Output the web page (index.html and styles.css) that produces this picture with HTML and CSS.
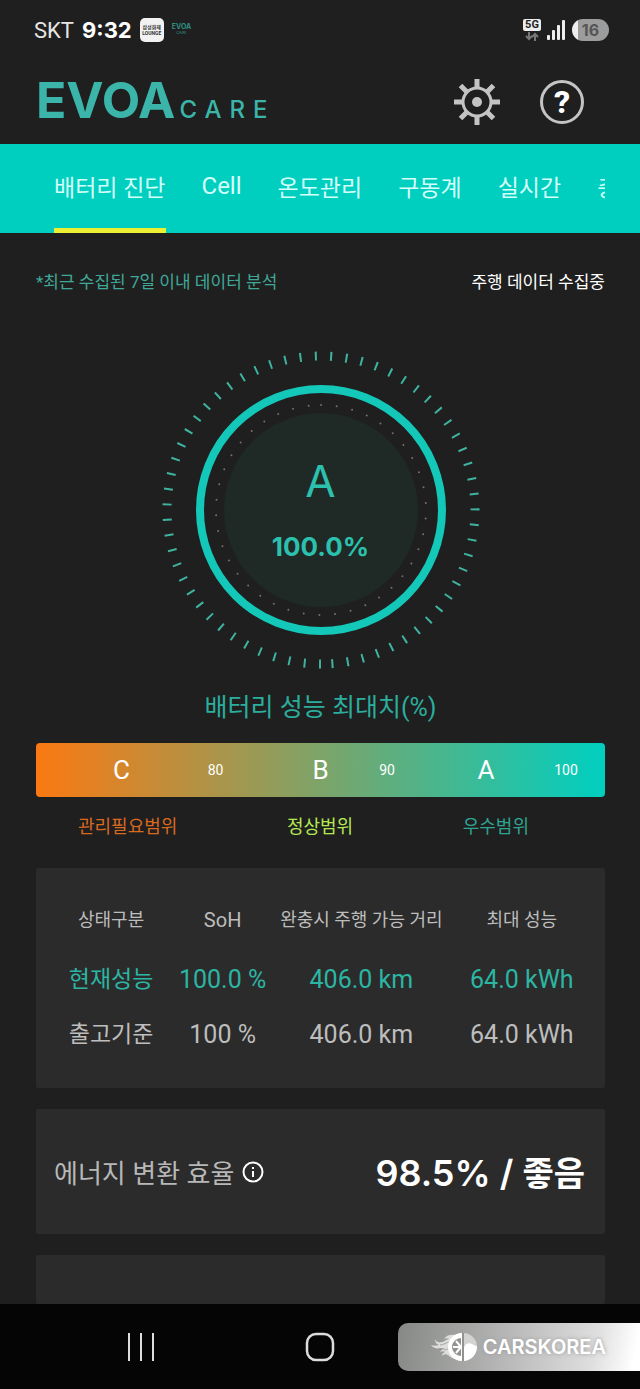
FILE: index.html
```html
<!DOCTYPE html>
<html lang="ko">
<head>
  <meta charset="UTF-8">
  <meta name="viewport" content="width=device-width, initial-scale=1.0">
  <title>EVOA CARE</title>
  <link rel="stylesheet" href="styles.css">
</head>
<body>
  <div class="status-bar">
    <span class="carrier">SKT</span>
    <span class="clock">9:32</span>
    <span class="app-badge"><span>삼성화재</span><span>LOUNGE</span></span>
    <span class="app-mini"><span>EVOA</span><span class="app-mini-sub">CARE</span></span>
    <div class="status-right">
      <span class="network">
        <span class="network-label">5G</span>
        <svg width="14" height="9" viewBox="0 0 14 9" fill="none" stroke="#777" stroke-width="2">
          <path d="M4 0v7M1 4l3 3 3-3M10 9V2M7 5l3-3 3 3"/>
        </svg>
      </span>
      <svg width="19" height="21" viewBox="0 0 19 21" fill="#eee">
        <rect x="0" y="15" width="3" height="5" rx="1"/>
        <rect x="5" y="10" width="3" height="10" rx="1"/>
        <rect x="10" y="5" width="3" height="15" rx="1"/>
        <rect x="15" y="0" width="3" height="20" rx="1"/>
      </svg>
      <span class="battery">16</span>
    </div>
  </div>

  <header class="header">
    <h1 class="logo"><span class="logo-main">EVOA</span><span class="logo-sub">CARE</span></h1>
    <div class="header-buttons">
      <button type="button" aria-label="설정">
        <svg width="46" height="46" viewBox="0 0 46 46" fill="none" stroke="#c4c4c4">
          <circle cx="23" cy="23" r="14" stroke-width="3"/>
          <circle cx="23" cy="23" r="5" fill="#c4c4c4" stroke="none"/>
          <path stroke-width="5" d="M23 0v9M23 37v9M0 23h9M37 23h9M6.500 6.500l6.500 6.500M33 33l6.500 6.500M39.500 6.500L33 13M13 33l-6.500 6.500"/>
        </svg>
      </button>
      <button type="button" class="help-btn" aria-label="도움말">?</button>
    </div>
  </header>

  <nav class="tabs">
    <div class="tab-list">
      <a href="#battery" class="tab active">배터리 진단</a>
      <a href="#cell" class="tab tab-latin">Cell</a>
      <a href="#temp" class="tab">온도관리</a>
      <a href="#drive" class="tab">구동계</a>
      <a href="#live" class="tab">실시간</a>
      <a href="#charge" class="tab">충전</a>
    </div>
  </nav>

  <main class="content">
    <div class="notice">
      <span class="notice-left">*최근 수집된 7일 이내 데이터 분석</span>
      <span>주행 데이터 수집중</span>
    </div>

    <div class="gauge">
      <svg width="320" height="320" viewBox="0 0 320 320" fill="none">
        <circle cx="160" cy="160" r="154" stroke="#3fb39f" stroke-width="9" stroke-dasharray="2 13.4" transform="rotate(90 160 160)"/>
        <circle cx="160" cy="160" r="121" stroke="#14c8b9" stroke-width="8"/>
        <circle cx="160" cy="160" r="105" stroke="#77706c" stroke-width="2" stroke-linecap="round" stroke-dasharray="0 15.77" transform="rotate(-90 160 160)"/>
        <circle cx="160" cy="160" r="97" fill="#1f2a27"/>
      </svg>
      <div class="gauge-text">
        <span class="grade">A</span>
        <span class="percent">100.0%</span>
      </div>
    </div>

    <h2 class="gauge-title">배터리 성능 최대치(%)</h2>

    <div class="range-bar">
      <b>C</b><span>80</span><b>B</b><span>90</span><b>A</b><span>100</span>
    </div>
    <div class="range-labels">
      <span class="bad">관리필요범위</span>
      <span class="normal">정상범위</span>
      <span class="good">우수범위</span>
    </div>

    <section class="card table-card">
      <table>
        <colgroup>
          <col class="col-name"><col class="col-soh"><col class="col-range"><col class="col-max">
        </colgroup>
        <thead>
          <tr>
            <th>상태구분</th>
            <th class="th-latin">SoH</th>
            <th>완충시 주행 가능 거리</th>
            <th>최대 성능</th>
          </tr>
        </thead>
        <tbody>
          <tr class="current">
            <th>현재성능</th>
            <td>100.0 %</td>
            <td>406.0 km</td>
            <td>64.0 kWh</td>
          </tr>
          <tr>
            <th>출고기준</th>
            <td>100 %</td>
            <td>406.0 km</td>
            <td>64.0 kWh</td>
          </tr>
        </tbody>
      </table>
    </section>

    <section class="card efficiency">
      <div class="efficiency-label">
        <span>에너지 변환 효율</span>
        <button type="button" aria-label="정보">
          <svg width="22" height="22" viewBox="0 0 22 22" fill="none" stroke="#fff" stroke-width="2">
            <circle cx="11" cy="11" r="9.500"/>
            <path d="M11 10v6M11 6v2"/>
          </svg>
        </button>
      </div>
      <div class="efficiency-value">98.5% / <span>좋음</span></div>
    </section>

    <section class="card next-card"></section>
  </main>

  <footer class="nav-bar">
    <button type="button" aria-label="최근 앱">
      <svg width="28" height="28" viewBox="0 0 28 28" stroke="#ddd" stroke-width="2">
        <path d="M2 0v28M14 0v28M26 0v28"/>
      </svg>
    </button>
    <button type="button" aria-label="홈">
      <svg width="30" height="30" viewBox="0 0 30 30" fill="none" stroke="#ddd" stroke-width="2.500">
        <rect x="2" y="2" width="26" height="26" rx="9"/>
      </svg>
    </button>
    <div class="watermark">
      <svg width="48" height="30" viewBox="0 0 48 30">
        <path fill="#dededd" d="M26 3C21 2 16 3 14 7c2-1 4-1 5 0-3 0-4 3-7 3-3 1-6 0-7-3 0 3 1 5 4 6-3 1-6 1-8 0 2 3 6 4 9 3 2 0 4 0 5 1-2 0-4 1-5 3 2-1 4-1 5 0-2 1-3 2-3 4 2-2 4-2 6-1 2 2 5 4 9 4z"/>
        <path fill="none" stroke="#a6a7a6" stroke-width="1" d="M10 13c4 0 6-3 10-3M14 18c3 0 4-2 7-1"/>
        <circle cx="33" cy="15" r="14" fill="#d3d3d2"/>
        <path fill="#fff" d="M32 1a14 14 0 0 0 0 28z"/>
        <path fill="#fff" d="M34 29V17c0-5 5-7 8-5 2 1 3 2 5 2 0 8-5 14-13 15z"/>
        <path fill="#929391" d="M31 6a9 9 0 0 0 0 18z"/>
        <path fill="none" stroke="#fff" stroke-width="2" d="M23 15h8M26 9l5 6-5 6"/>
        <path stroke="#929391" stroke-width="2" d="M33 1v28"/>
      </svg>
      <span>CARSKOREA</span>
    </div>
  </footer>
</body>
</html>
```
FILE: styles.css
```css
* {
  box-sizing: border-box;
}
body {
  font-family: Roboto, "Noto Sans CJK KR", sans-serif;
  background-color: #1f1f1f;
  color: #fff;
  margin: 0;
  min-height: 100vh;
  display: flex;
  flex-direction: column;
}
button {
  display: flex;
  padding: 0;
  background: none;
  border: none;
  color: inherit;
  cursor: pointer;
}

/* status bar */
.status-bar {
  display: flex;
  align-items: center;
  height: 60px;
  padding: 0 31px 0 34px;
  gap: 8px;
}
.carrier {
  font-size: 22px;
  color: #e6e6e6;
}
.clock {
  font-family: Inter, sans-serif;
  font-size: 22px;
  font-weight: 700;
}
.app-badge,
.app-mini {
  display: flex;
  flex-direction: column;
  align-items: center;
  justify-content: center;
  font-weight: 700;
  line-height: 6px;
}
.app-badge {
  width: 24px;
  height: 24px;
  border-radius: 5px;
  background: #f2f2f2;
  color: #333;
  font-size: 5px;
}
.app-mini {
  color: #2f8f82;
  font-family: Inter, sans-serif;
  font-size: 7px;
}
.app-mini-sub {
  font-size: 4px;
  font-weight: 400;
}
.status-right {
  display: flex;
  align-items: center;
  gap: 6px;
  margin-left: auto;
}
.network {
  display: flex;
  flex-direction: column;
  align-items: center;
  gap: 1px;
}
.network-label {
  width: 18px;
  border-radius: 2px;
  background: #eee;
  color: #1f1f1f;
  font-size: 11px;
  font-weight: 700;
  line-height: 12px;
  text-align: center;
}
.battery {
  width: 37px;
  border-radius: 11px;
  background: linear-gradient(90deg, #eee 6px, #9c9c9c 6px);
  color: #555;
  font-family: Inter, sans-serif;
  font-size: 16px;
  font-weight: 700;
  line-height: 22px;
  text-align: center;
}

/* header */
.header {
  display: flex;
  align-items: center;
  justify-content: space-between;
  height: 84px;
  padding: 0 56px 0 36px;
}
.logo {
  display: flex;
  align-items: baseline;
  gap: 4px;
  margin: 0;
  padding-top: 6px;
  color: #3bb5a9;
  font-family: Inter, sans-serif;
  line-height: 48px;
}
.logo-main {
  font-size: 50px;
  font-weight: 700;
}
.logo-sub {
  font-size: 24px;
  font-weight: 500;
  letter-spacing: 8px;
}
.header-buttons {
  display: flex;
  align-items: center;
  gap: 40px;
}
.help-btn {
  align-items: center;
  justify-content: center;
  width: 44px;
  height: 44px;
  border: 3px solid #c4c4c4;
  border-radius: 50%;
  font-family: Roboto, sans-serif;
  font-size: 32px;
  font-weight: 800;
}

/* tabs */
.tabs {
  background: #00cfc0;
  padding: 0 35px 0 36px;
}
.tab-list {
  display: flex;
  gap: 36px;
  height: 89px;
  padding-left: 18px;
  overflow: hidden;
}
.tab {
  display: flex;
  flex-shrink: 0;
  align-items: center;
  border-bottom: 5px solid transparent;
  color: #d4fffa;
  font-size: 23px;
  text-decoration: none;
}
.tab-latin {
  font-size: 24px;
}
.tab.active {
  border-color: #edf032;
}

/* content */
.content {
  display: flex;
  flex-direction: column;
  flex: 1;
  padding: 37px 35px 0 36px;
}
.notice {
  display: flex;
  justify-content: space-between;
  font-size: 17px;
  line-height: 24px;
}
.notice-left {
  color: #3fa898;
}
.gauge {
  display: grid;
  place-items: center;
  margin-top: 56px;
}
.gauge svg,
.gauge-text {
  grid-area: 1 / 1;
}
.gauge-text {
  display: flex;
  flex-direction: column;
  align-items: center;
  gap: 26px;
  color: #2cc0ae;
  font-family: Inter, sans-serif;
}
.grade {
  font-size: 44px;
  line-height: 48px;
}
.percent {
  font-size: 26px;
  font-weight: 700;
  line-height: 32px;
}
.gauge-title {
  margin: 20px 0 17px;
  color: #2bae9e;
  font-size: 25px;
  font-weight: 400;
  line-height: 36px;
  text-align: center;
}
.range-bar {
  display: grid;
  grid-template-columns: 35fr 153fr 57fr 76fr 122fr 38fr;
  align-items: center;
  justify-items: center;
  height: 54px;
  padding: 0 20px 0 68px;
  border-radius: 4px;
  background: linear-gradient(90deg, #fb7912, #00cfc0);
  font-size: 14px;
}
.range-bar b {
  font-size: 26px;
  font-weight: 400;
}
.range-labels {
  display: flex;
  justify-content: space-between;
  margin: 18px 0 29px;
  padding: 0 76px 0 42px;
  font-size: 18px;
  line-height: 24px;
}
.bad {
  color: #d9691f;
}
.normal {
  color: #b5e853;
}
.good {
  color: #2fa392;
}

/* cards */
.card {
  background: #2b2b2b;
  border-radius: 2px;
  margin-bottom: 21px;
}
.table-card {
  padding: 19px 7px 26px 18px;
}
table {
  width: 100%;
  table-layout: fixed;
  border-collapse: collapse;
  color: #bdbdbd;
}
.col-name {
  width: 21%;
}
.col-soh {
  width: 20%;
}
.col-range {
  width: 31%;
}
.col-max {
  width: 28%;
}
th, td {
  height: 55px;
  padding: 0;
  font-size: 25px;
  font-weight: 400;
  line-height: 30px;
  text-align: center;
  white-space: nowrap;
}
tbody th {
  font-size: 23px;
}
thead th {
  height: 65px;
  font-size: 18px;
}
thead .th-latin {
  font-size: 20px;
}
.current {
  color: #2bb5a3;
}
.efficiency {
  display: flex;
  align-items: center;
  justify-content: space-between;
  height: 125px;
  padding: 0 20px 0 18px;
}
.efficiency-label {
  display: flex;
  align-items: center;
  gap: 8px;
  color: #b8b8b8;
  font-size: 26px;
}
.efficiency-value {
  font-family: Inter, "Noto Sans CJK KR", sans-serif;
  font-size: 36px;
  font-weight: 600;
}
.efficiency-value span {
  font-size: 34px;
  font-weight: 700;
}
.next-card {
  flex: 1;
  min-height: 48px;
  margin-bottom: 0;
}

/* bottom navigation */
.nav-bar {
  position: relative;
  display: grid;
  grid-template-columns: repeat(3, 1fr);
  place-items: center;
  height: 85px;
  padding: 0 52px;
  background: #050505;
}
.watermark {
  position: absolute;
  right: 0;
  bottom: 18px;
  display: flex;
  align-items: center;
  gap: 5px;
  height: 48px;
  padding: 0 34px 0 32px;
  border-radius: 10px 0 0 10px;
  background: linear-gradient(100deg, #868885, #bcbdbc 50%, #dedede 80%, #fff 97%);
  font-family: Inter, sans-serif;
  font-size: 20px;
  font-weight: 600;
  text-shadow: 0 0 4px #999;
}
```
